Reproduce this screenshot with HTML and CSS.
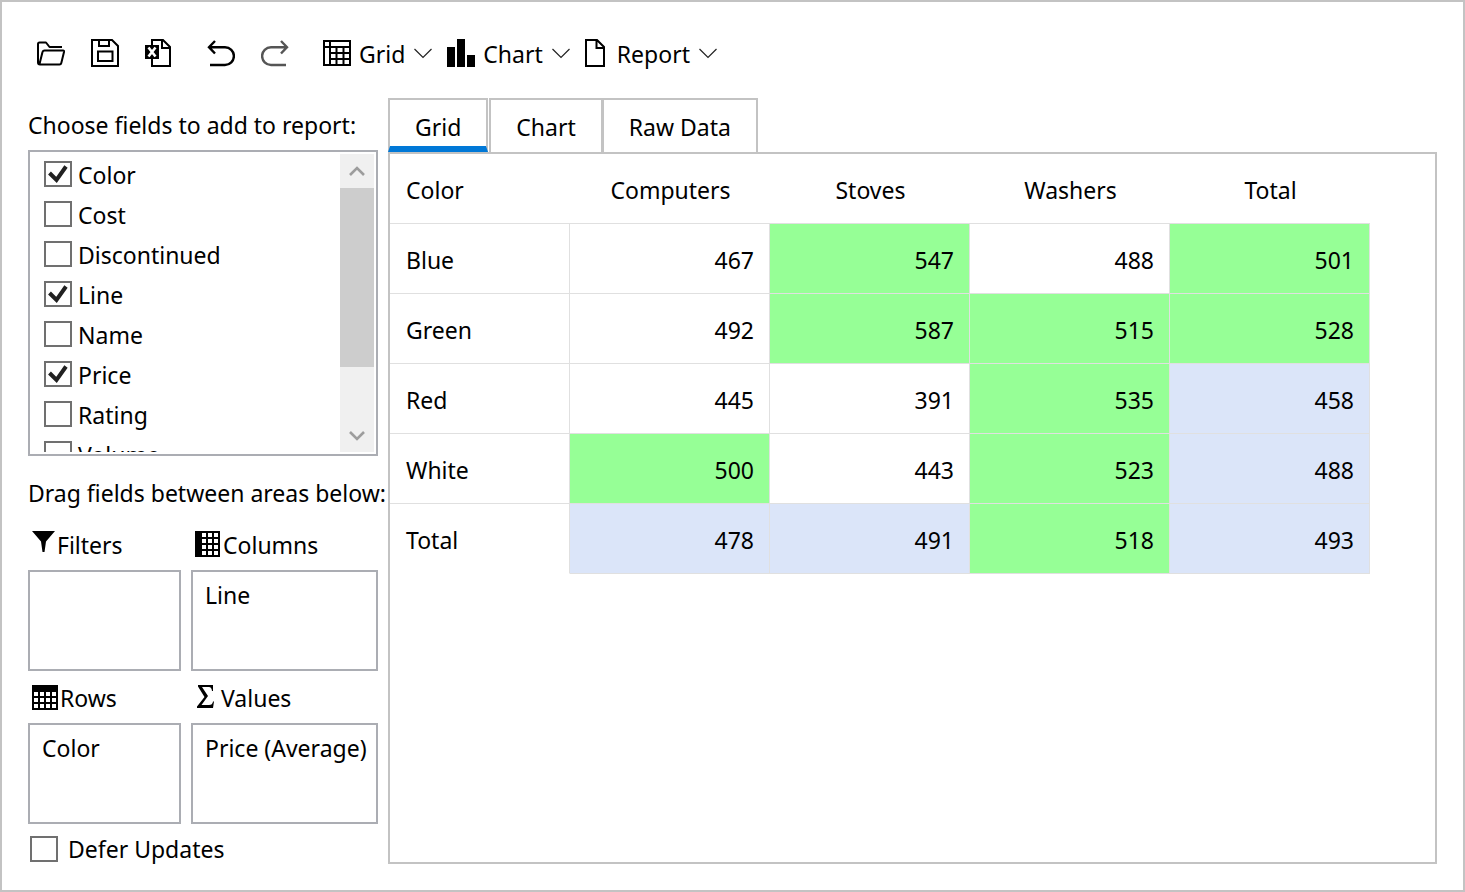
FILE: index.html
```html
<!DOCTYPE html>
<html lang="en">
<head>
<meta charset="utf-8">
<title>Report designer</title>
<link rel="stylesheet" href="styles.css">
</head>
<body>
<div class="app">
  <header class="toolbar">
    <div class="tool-group">
      <button class="tool" type="button" aria-label="Open">
        <svg width="29" height="28" viewBox="0 0 29 28" fill="none" stroke="#000" stroke-width="2" stroke-linejoin="round"><path d="M26 8H13.500L10 3.500H3.500Q2 3.500 2 5V23.500Q2 25.500 4 25.500H23.500Q25 25.500 25.300 24L28 13Q28.300 11.500 27 11.500H8.500Q7 11.500 6.500 13L3.500 25"/></svg>
      </button>
      <button class="tool" type="button" aria-label="Save">
        <svg width="28" height="28" viewBox="0 0 28 28" fill="none" stroke="#000" stroke-width="2"><path d="M1 1H21L27 7V27H1ZM8 1V7H18V1M7 12.500H21.500V22H7Z"/></svg>
      </button>
      <button class="tool" type="button" aria-label="Export to Excel">
        <svg width="26" height="28" viewBox="0 0 26 28"><path d="M7 1H18L25 8V27H7ZM17 1V9H25" fill="none" stroke="#000" stroke-width="2"/><path d="M0 6H14V20H0Z"/><path d="M3.500 8.500L10.500 17.500M10.500 8.500L3.500 17.500" stroke="#fff" stroke-width="2.600"/></svg>
      </button>
    </div>
    <div class="tool-group history">
      <button class="tool" type="button" aria-label="Undo">
        <svg width="28" height="28" viewBox="0 0 28 28" fill="none" stroke="#000" stroke-width="2.400"><path d="M8 2L2 8.200L8 14.500M2 8.200H18A8.800 8.800 0 0 1 18 26H3"/></svg>
      </button>
      <button class="tool" type="button" aria-label="Redo">
        <svg width="28" height="28" viewBox="0 0 28 28" fill="none" stroke="#555" stroke-width="2.400"><path d="M20 2L26 8.200L20 14.500M26 8.200H10A8.800 8.800 0 0 0 10 26H25"/></svg>
      </button>
    </div>
    <div class="menus">
      <button class="menu" type="button">
        <svg width="28" height="26" viewBox="0 0 28 26" fill="none" stroke="#000" stroke-width="2"><path d="M1 1H27V25H1ZM1 7H27M7 1V25M13.500 7V25M20.500 7V25M7 13H27M7 19H27"/></svg>
        <span class="menu-text">Grid</span>
        <svg width="18" height="11" viewBox="0 0 18 11" fill="none" stroke="#222" stroke-width="1.200"><path d="M.5 1L9 9.500L17.500 1"/></svg>
      </button>
      <button class="menu" type="button">
        <svg width="28" height="28" viewBox="0 0 28 28"><path d="M0 8H8V28H0ZM10 0H18V28H10ZM20 16H28V28H20Z"/></svg>
        <span class="menu-text">Chart</span>
        <svg width="18" height="11" viewBox="0 0 18 11" fill="none" stroke="#222" stroke-width="1.200"><path d="M.5 1L9 9.500L17.500 1"/></svg>
      </button>
      <button class="menu" type="button">
        <svg width="20" height="28" viewBox="0 0 20 28" fill="none" stroke="#000" stroke-width="2"><path d="M1 1H12L19 8V27H1ZM11.500 1V9H19"/></svg>
        <span class="menu-text report-text">Report</span>
        <svg width="18" height="11" viewBox="0 0 18 11" fill="none" stroke="#222" stroke-width="1.200"><path d="M.5 1L9 9.500L17.500 1"/></svg>
      </button>
    </div>
  </header>

  <main class="workspace">
    <section class="sidebar">
      <h2 class="caption">Choose fields to add to report:</h2>
      <div class="field-box">
        <ul class="fields">
          <li><label class="field"><input class="check" type="checkbox" checked><span>Color</span></label></li>
          <li><label class="field"><input class="check" type="checkbox"><span>Cost</span></label></li>
          <li><label class="field"><input class="check" type="checkbox"><span>Discontinued</span></label></li>
          <li><label class="field"><input class="check" type="checkbox" checked><span>Line</span></label></li>
          <li><label class="field"><input class="check" type="checkbox"><span>Name</span></label></li>
          <li><label class="field"><input class="check" type="checkbox" checked><span>Price</span></label></li>
          <li><label class="field"><input class="check" type="checkbox"><span>Rating</span></label></li>
          <li><label class="field"><input class="check" type="checkbox"><span>Volume</span></label></li>
        </ul>
        <div class="scrollbar">
          <button class="scroll-arrow" type="button" aria-label="Scroll up"><svg width="16" height="12" viewBox="0 0 16 12" fill="none" stroke="#9d9d9d" stroke-width="2.600"><path d="M1 10L8 3L15 10"/></svg></button>
          <div class="scroll-track"><div class="scroll-thumb"></div></div>
          <button class="scroll-arrow" type="button" aria-label="Scroll down"><svg width="16" height="12" viewBox="0 0 16 12" fill="none" stroke="#9d9d9d" stroke-width="2.600"><path d="M1 3L8 10L15 3"/></svg></button>
        </div>
      </div>

      <h2 class="caption drag-caption">Drag fields between areas below:</h2>
      <div class="areas">
        <div class="area">
          <h3 class="area-title filters-title"><svg width="23" height="26" viewBox="0 0 23 26"><path d="M0 0H23L14 10.500L12.500 21H10.500L9 10.500Z"/></svg><span>Filters</span></h3>
          <div class="drop"></div>
        </div>
        <div class="area">
          <h3 class="area-title columns-title"><svg width="25" height="26" viewBox="0 0 25 26"><path d="M0 0H25V26H0Z"/><path fill="#fff" d="M7 2h4v4H7zm6 0h4v4h-4zm6 0h4v4h-4zM7 8h4v4H7zm6 0h4v4h-4zm6 0h4v4h-4zM7 14h4v4H7zm6 0h4v4h-4zm6 0h4v4h-4zM7 20h4v4H7zm6 0h4v4h-4zm6 0h4v4h-4z"/></svg><span>Columns</span></h3>
          <div class="drop">Line</div>
        </div>
        <div class="area">
          <h3 class="area-title rows-title"><svg width="26" height="25" viewBox="0 0 26 25"><path d="M0 0H26V25H0Z"/><path fill="#fff" d="M2 7h4v4H2zm6 0h4v4H8zm6 0h4v4h-4zm6 0h4v4h-4zM2 13h4v4H2zm6 0h4v4H8zm6 0h4v4h-4zm6 0h4v4h-4zM2 19h4v4H2zm6 0h4v4H8zm6 0h4v4h-4zm6 0h4v4h-4z"/></svg><span>Rows</span></h3>
          <div class="drop">Color</div>
        </div>
        <div class="area">
          <h3 class="area-title values-title"><svg width="18" height="24" viewBox="0 0 18 24"><path d="M1 0H16V6H15Q14.500 2 12 2H5L11 11L4.500 20H12Q15.500 20 16 16.500H17L16 23H0V21.500L7.500 12L1 1.500Z"/></svg><span>Values</span></h3>
          <div class="drop">Price (Average)</div>
        </div>
      </div>
      <label class="defer"><input class="check" type="checkbox"><span>Defer Updates</span></label>
    </section>

    <section class="report">
      <div class="tabs" role="tablist">
        <button class="tab active" type="button" role="tab" aria-selected="true">Grid</button>
        <button class="tab" type="button" role="tab" aria-selected="false">Chart</button>
        <button class="tab" type="button" role="tab" aria-selected="false">Raw Data</button>
      </div>
      <div class="panel" role="tabpanel">
        <table class="pivot">
          <thead>
            <tr><th class="corner" scope="col">Color</th><th scope="col">Computers</th><th scope="col">Stoves</th><th scope="col">Washers</th><th scope="col">Total</th></tr>
          </thead>
          <tbody>
            <tr><th scope="row">Blue</th><td>467</td><td class="high">547</td><td>488</td><td class="high">501</td></tr>
            <tr><th scope="row">Green</th><td>492</td><td class="high">587</td><td class="high">515</td><td class="high">528</td></tr>
            <tr><th scope="row">Red</th><td>445</td><td>391</td><td class="high">535</td><td class="total">458</td></tr>
            <tr><th scope="row">White</th><td class="high">500</td><td>443</td><td class="high">523</td><td class="total">488</td></tr>
            <tr><th scope="row">Total</th><td class="total">478</td><td class="total">491</td><td class="high">518</td><td class="total">493</td></tr>
          </tbody>
        </table>
      </div>
    </section>
  </main>
</div>
</body>
</html>
```
FILE: styles.css
```css
* {
  box-sizing: border-box;
}

body {
  margin: 0;
  background: #fff;
  color: #000;
  font: 23px/32px "Segoe UI", "Noto Sans", sans-serif;
}

button {
  margin: 0;
  padding: 0;
  border: 0;
  background: none;
  color: inherit;
  font: inherit;
}

svg {
  display: block;
  flex: none;
}

.app {
  display: flex;
  flex-direction: column;
  min-height: 100vh;
  padding: 28px 26px 26px;
  border: 2px solid #c3c3c3;
}

.toolbar {
  display: flex;
  align-items: center;
  height: 46px;
  margin-bottom: 22px;
  padding-left: 8px;
}

.tool-group {
  display: flex;
  align-items: center;
  gap: 26px;
}

.history {
  margin-left: 36px;
}

.menus {
  display: flex;
  align-items: center;
  gap: 15px;
  margin-left: 34px;
}

.menu {
  display: flex;
  align-items: center;
}

.menu-text {
  margin: 2px 9px 0 8px;
}

.report-text {
  margin-left: 12px;
}

.workspace {
  display: grid;
  flex: 1;
  grid-template-columns: 350px minmax(0, 1fr);
  gap: 10px;
}

.caption {
  height: 52px;
  margin: 0;
  padding-top: 11px;
  font-size: 23px;
  font-weight: 400;
  white-space: nowrap;
}

.drag-caption {
  height: 62px;
  padding-top: 21px;
}

.field-box {
  display: flex;
  height: 306px;
  padding: 2px;
  border: 2px solid #abadb3;
}

.fields {
  flex: 1;
  margin: 0;
  padding: 0 0 0 12px;
  overflow: hidden;
  list-style: none;
}

.field {
  display: flex;
  align-items: center;
  gap: 6px;
  height: 40px;
}

.field span,
.area-title span {
  padding-top: 2px;
}

.check {
  flex: none;
  width: 28px;
  height: 26px;
  margin: 0;
  border: 2px solid #707070;
  background: #fff;
  appearance: none;
}

.check:checked {
  background: url("data:image/svg+xml,%3Csvg xmlns='http://www.w3.org/2000/svg' viewBox='0 0 24 22'%3E%3Cpath d='M3.500 10L10.500 17L20 3.500' fill='none' stroke='%23212121' stroke-width='4'/%3E%3C/svg%3E") center / 24px 22px no-repeat;
}

.scrollbar {
  display: flex;
  flex-direction: column;
  width: 34px;
  background: #f0f0f0;
}

.scroll-arrow {
  display: grid;
  height: 34px;
  place-items: center;
}

.scroll-track {
  flex: 1;
}

.scroll-thumb {
  height: 78%;
  background: #cdcdcd;
}

.areas {
  display: grid;
  grid-template-columns: 153px 187px;
  gap: 0 10px;
}

.area-title {
  display: flex;
  align-items: center;
  height: 52px;
  margin: 0;
  padding-left: 4px;
  font-size: 23px;
  font-weight: 400;
}

.filters-title {
  gap: 2px;
}

.columns-title {
  gap: 3px;
}

.rows-title {
  gap: 2px;
}

.values-title {
  gap: 6px;
  padding-left: 6px;
}

.drop {
  height: 101px;
  padding: 7px 12px;
  border: 2px solid #abadb3;
  white-space: nowrap;
}

.defer {
  display: flex;
  align-items: center;
  gap: 10px;
  margin-top: 10px;
  padding-left: 2px;
  line-height: 30px;
}

.report {
  display: flex;
  flex-direction: column;
}

.tabs {
  display: flex;
  height: 54px;
}

.tab {
  padding: 2px 25px 0;
  border: 2px solid #c3c3c3;
  border-bottom: 0;
}

.tab + .tab {
  margin-left: 1px;
}

.tab + .tab + .tab {
  margin-left: -1px;
}

.tab.active {
  padding-top: 8px;
  border-bottom: 6px solid #0078d7;
}

.panel {
  flex: 1;
  border: 2px solid #c3c3c3;
}

.pivot {
  border-spacing: 0;
  table-layout: fixed;
  width: 980px;
}

.pivot th,
.pivot td {
  height: 70px;
  padding: 2px 15px 0 16px;
  border-bottom: 1px solid #e0e0e0;
  font-weight: 400;
  text-align: right;
}

.pivot thead th {
  text-align: center;
}

.pivot thead .corner,
.pivot tbody th {
  width: 180px;
  text-align: left;
}

.pivot tbody th,
.pivot tbody td {
  border-right: 1px solid #e0e0e0;
}

.pivot tbody tr:last-child th {
  border-bottom-color: transparent;
}

.pivot .high {
  background: #96ff96;
}

.pivot .total {
  background: #dbe5f9;
}
```
